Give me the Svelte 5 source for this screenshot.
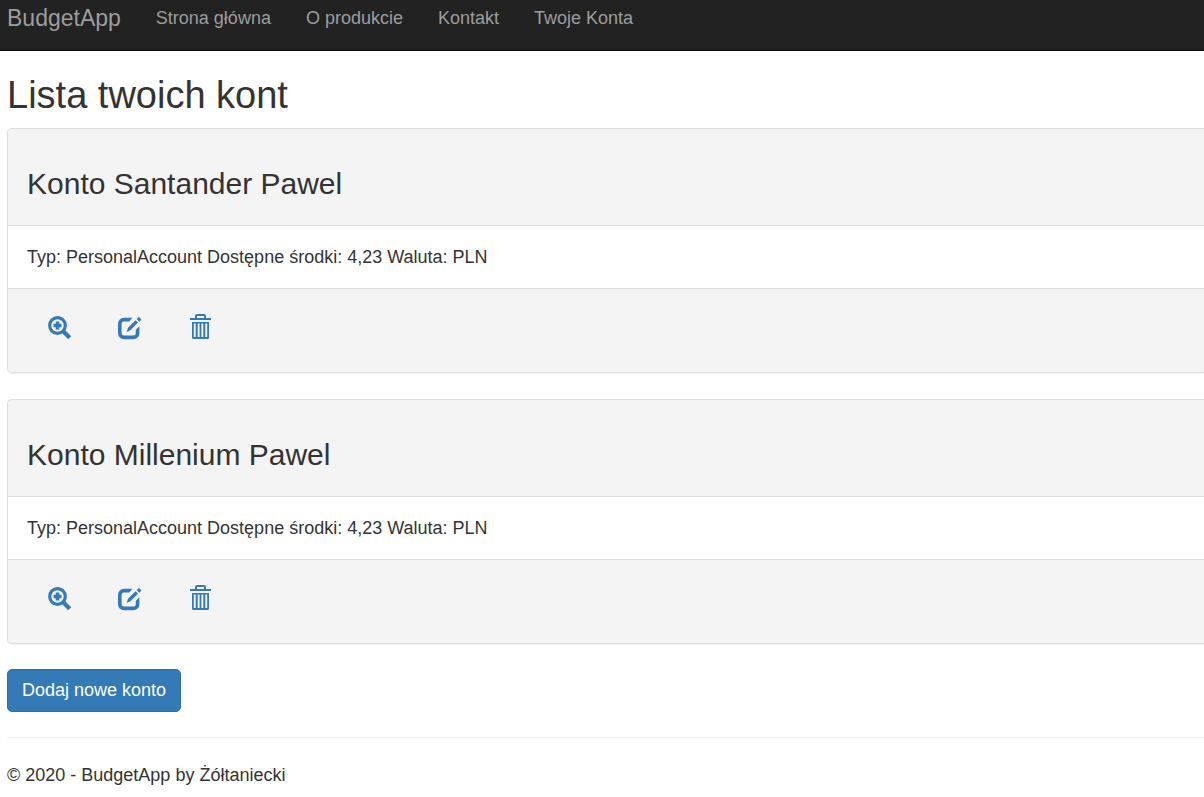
<script>
  const links = ['Strona główna', 'O produkcie', 'Kontakt', 'Twoje Konta'];
  const accounts = [
    { name: 'Konto Santander Pawel', type: 'PersonalAccount', funds: '4,23', currency: 'PLN' },
    { name: 'Konto Millenium Pawel', type: 'PersonalAccount', funds: '4,23', currency: 'PLN' }
  ];
</script>

<nav class="navbar">
  <a class="brand" href="#home">BudgetApp</a>
  {#each links as link}
    <a class="link" href="#nav">{link}</a>
  {/each}
</nav>

<main>
  <h2>Lista twoich kont</h2>

  <div class="accounts">
    {#each accounts as account}
      <section class="panel">
        <header><h3>{account.name}</h3></header>
        <div class="body">
          Typ: {account.type} Dostępne środki: {account.funds} Waluta: {account.currency}
        </div>
        <div class="actions">
          <a href="#details" aria-label="Szczegóły">
            <svg viewBox="0 0 26 26" aria-hidden="true">
              <circle cx="10.5" cy="11.5" r="7.8" fill="none" stroke="currentColor" stroke-width="3.2" />
              <path d="M10.5 7.5v8M6.5 11.5h8" fill="none" stroke="currentColor" stroke-width="3.6" />
              <path d="M16 17L22.7 23.7" fill="none" stroke="currentColor" stroke-width="4.2" />
            </svg>
          </a>
          <a href="#edit" aria-label="Edytuj">
            <svg viewBox="0 0 26 26" aria-hidden="true">
              <path d="M14.6 3.8L11.2 7.4H6A2.4 2.4 0 0 0 3.6 9.8v9.4A2.4 2.4 0 0 0 6 21.6h9.4a2.4 2.4 0 0 0 2.4-2.4v-3.4l3.6-3.6v7a6 6 0 0 1-6 6H6a6 6 0 0 1-6-6V9.8a6 6 0 0 1 6-6z" fill="currentColor" />
              <path d="M8.6 18l1.4-4.2L17.6 6.2l2.4 2.4-7.6 7.6z" fill="currentColor" />
              <path d="M18.7 5l1.6-1.6q.6-.6 1.2 0l1.5 1.5q.6.6 0 1.2l-1.6 1.6z" fill="currentColor" />
            </svg>
          </a>
          <a href="#delete" aria-label="Usuń">
            <svg viewBox="0 0 26 26" aria-hidden="true">
              <path d="M1 4h21v2H1z" fill="currentColor" />
              <path d="M7 4.5V2q0-1 1-1h7q1 0 1 1v2.5" fill="none" stroke="currentColor" stroke-width="2" />
              <path d="M3 8h17v15.5a1.5 1.5 0 0 1-1.5 1.5h-14A1.5 1.5 0 0 1 3 23.5zM4.8 9.5V23h1.9V9.5zM8.7 9.5V23h1.9V9.5zM12.4 9.5V23h1.9V9.5zM16.3 9.5V23h1.9V9.5z" fill="currentColor" fill-rule="evenodd" />
            </svg>
          </a>
        </div>
      </section>
    {/each}
  </div>

  <a class="button" href="#new">Dodaj nowe konto</a>

  <hr />
  <footer>© 2020 - BudgetApp by Żółtaniecki</footer>
</main>

<style>
  :global(body) {
    margin: 0;
    background: #fff;
    color: #333;
    font: 18px/26px "Liberation Sans", Arial, sans-serif;
  }
  .navbar {
    display: flex;
    align-items: flex-start;
    gap: 35px;
    min-height: 45px;
    padding: 5px 7px 0;
    background: #222;
    border-bottom: 1px solid #080808;
  }
  .navbar a {
    color: #9d9d9d;
    text-decoration: none;
  }
  .navbar .brand {
    font-size: 23px;
  }
  main {
    padding: 23px 0 9px 7px;
  }
  h2,
  h3 {
    margin: 0;
    font-weight: 400;
  }
  h2 {
    margin-bottom: 12px;
    font-size: 38px;
    line-height: 42px;
  }
  h3 {
    font-size: 30px;
    line-height: 34px;
  }
  .accounts {
    display: grid;
    gap: 26px;
  }
  .panel {
    border: 1px solid #ddd;
    border-right: 0;
    border-radius: 5px 0 0 5px;
    box-shadow: 0 1px 1px rgba(0, 0, 0, 0.05);
    overflow: hidden;
  }
  .panel header {
    padding: 38px 19px 24px;
    background: #f4f4f4;
    border-bottom: 1px solid #ddd;
  }
  .body {
    padding: 18px 19px;
  }
  .actions {
    display: flex;
    gap: 45px;
    padding: 25px 39px 32px;
    background: #f4f4f4;
    border-top: 1px solid #ddd;
  }
  .actions a {
    color: #337ab7;
  }
  .actions svg {
    display: block;
    width: 26px;
    height: 26px;
  }
  .button {
    display: inline-block;
    margin-top: 25px;
    padding: 7px 14px 8px;
    border: 1px solid #2e6da4;
    border-radius: 5px;
    background: #337ab7;
    color: #fff;
    text-decoration: none;
  }
  hr {
    margin: 25px 0 24px;
    border: 0;
    border-top: 1px solid #eee;
  }
</style>
